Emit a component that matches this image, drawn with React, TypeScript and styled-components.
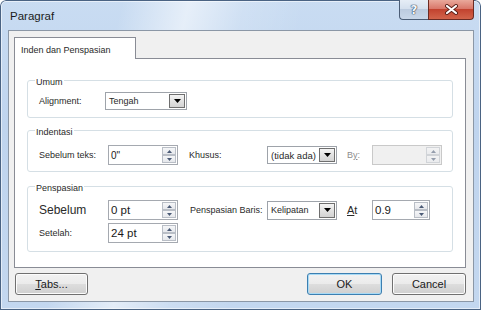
import React from "react";
import styled, { createGlobalStyle, css } from "styled-components";

const GlobalStyle = createGlobalStyle`
  html, body { margin: 0; padding: 0; background: #ffffff; }
  body { font-family: "Liberation Sans", Arial, sans-serif; }
  * { box-sizing: border-box; }
`;

const Window = styled.div`
  width: 481px;
  height: 310px;
  display: flex;
  flex-direction: column;
  padding: 0 7px 8px 8px;
  border-radius: 6px 6px 0 0;
  overflow: hidden;
  background:
    linear-gradient(104deg, rgba(255,255,255,0) 22%, rgba(255,255,255,0.55) 34%, rgba(255,255,255,0.15) 44%, rgba(255,255,255,0) 55%),
    linear-gradient(180deg, #c9dcf2 0%, #bfd4ee 40%, #c3d7ef 100%);
  box-shadow: inset 0 0 0 1px #4a6383, inset 0 0 0 2px rgba(255, 255, 255, 0.55);
`;

const TitleBar = styled.div`
  height: 30px;
  display: flex;
  align-items: center;
  padding-left: 2px;
`;

const TitleText = styled.span`
  font-size: 11.5px;
  color: #1b1b1b;
  margin-top: 1px;
`;

const CaptionGroup = styled.div`
  margin-left: auto;
  align-self: flex-start;
  display: flex;
  height: 20px;
`;

const CaptionButton = styled.div<{ $kind: "help" | "close" }>`
  height: 20px;
  display: flex;
  align-items: center;
  justify-content: center;
  border: 1px solid #4b5d76;
  border-top: none;
  ${(p) =>
    p.$kind === "help"
      ? css`
          width: 29px;
          border-right: none;
          border-radius: 0 0 0 4px;
          background: linear-gradient(180deg, #e6edf6 0%, #d5e0ee 45%, #bccbdf 50%, #c9d7e9 100%);
        `
      : css`
          width: 46px;
          border-radius: 0 0 4px 0;
          border-color: #6b2b23;
          background: linear-gradient(180deg, #e9a99b 0%, #d9786a 45%, #c2432f 50%, #d2644b 100%);
        `}
`;

const HelpGlyph = styled.span`
  font-family: "DejaVu Sans", sans-serif;
  font-weight: bold;
  font-size: 12px;
  line-height: 12px;
  color: #f4f7fb;
  text-shadow: 0 0 1px #2d3c52, 0 0 1px #2d3c52, 0 0 1px #2d3c52;
`;

const Client = styled.div`
  flex: 1;
  display: flex;
  flex-direction: column;
  background: #f0f0f0;
  border: 1px solid #8b97a6;
  padding: 6px 7px 6px 5px;
`;

const TabStrip = styled.div`
  display: flex;
  height: 21px;
  position: relative;
  z-index: 1;
`;

const Tab = styled.div`
  width: 122px;
  height: 22px;
  background: #ffffff;
  border: 1px solid #898c95;
  border-bottom: none;
  font-size: 9px;
  color: #2a2a2a;
  padding: 7px 0 0 6px;
`;

const TabPanel = styled.div`
  height: 210px;
  background: #ffffff;
  border: 1px solid #898c95;
  padding: 21px 12px 0 12px;
  display: flex;
  flex-direction: column;
`;

const GroupBox = styled.div<{ $pt: number; $pb: number; $mt: number }>`
  position: relative;
  margin-top: ${(p) => p.$mt}px;
  border: 1px solid #d5dfe5;
  border-radius: 3px;
  padding: ${(p) => p.$pt}px 0 ${(p) => p.$pb}px 11px;
  display: flex;
  flex-direction: column;
  gap: 3px;
`;

const Legend = styled.span`
  position: absolute;
  top: -4px;
  left: 7px;
  padding: 0 1px;
  background: #ffffff;
  font-size: 9px;
  line-height: 11px;
  color: #2a2a2a;
`;

const Row = styled.div`
  display: flex;
  align-items: center;
`;

const Label = styled.span<{ $w: number; $ml?: number; $size?: number; $muted?: boolean }>`
  width: ${(p) => p.$w}px;
  margin-left: ${(p) => p.$ml ?? 0}px;
  font-size: ${(p) => p.$size ?? 9}px;
  color: ${(p) => (p.$muted ? "#8d8d8d" : "#2a2a2a")};
  white-space: nowrap;
  u { text-decoration: underline; text-underline-offset: 1px; }
`;

const SpinBox = styled.div<{ $w: number; $disabled?: boolean }>`
  width: ${(p) => p.$w}px;
  height: 20px;
  display: flex;
  border: 1px solid ${(p) => (p.$disabled ? "#c9c9c9" : "#a5a9b0")};
  background: ${(p) => (p.$disabled ? "#f0f0f0" : "#ffffff")};
`;

const SpinText = styled.span<{ $size?: number }>`
  flex: 1;
  padding-left: 2px;
  display: flex;
  align-items: center;
  font-size: ${(p) => p.$size ?? 11.5}px;
  color: #1a1a1a;
`;

const SpinButtons = styled.div<{ $disabled?: boolean }>`
  width: 15px;
  display: flex;
  flex-direction: column;
  padding: 1px 1px 1px 0;
  opacity: ${(p) => (p.$disabled ? 0.55 : 1)};
`;

const SpinHalf = styled.div`
  flex: 1;
  display: flex;
  align-items: center;
  justify-content: center;
  border: 1px solid #b9bec6;
  background: linear-gradient(180deg, #f5f6f8 0%, #e6e8ec 100%);
`;

const Combo = styled.div<{ $w: number; $h: number }>`
  width: ${(p) => p.$w}px;
  height: ${(p) => p.$h}px;
  display: flex;
  border: 1px solid #9ea3aa;
  background: #ffffff;
`;

const ComboText = styled.span<{ $size?: number }>`
  flex: 1;
  display: flex;
  align-items: center;
  padding-left: 3px;
  font-size: ${(p) => p.$size ?? 9}px;
  color: #2a2a2a;
  white-space: nowrap;
`;

const ComboButton = styled.div`
  width: 16px;
  margin: 1px;
  display: flex;
  align-items: center;
  justify-content: center;
  border: 1px solid #6f6f6f;
  background: linear-gradient(180deg, #f4f4f4 0%, #e2e2e2 50%, #d3d3d3 100%);
`;

const ButtonRow = styled.div`
  display: flex;
  margin-top: 5px;
  padding: 0 0 0 1px;
  gap: 10px;
`;

const PushButton = styled.div<{ $w: number; $default?: boolean }>`
  width: ${(p) => p.$w}px;
  height: 22px;
  display: flex;
  align-items: center;
  justify-content: center;
  border-radius: 3px;
  font-size: 11px;
  color: #1a1a1a;
  border: 1px solid ${(p) => (p.$default ? "#3c7fb1" : "#707070")};
  background: linear-gradient(180deg, #f2f2f2 0%, #ebebeb 48%, #dddddd 52%, #cfcfcf 100%);
  box-shadow: inset 0 0 0 1px ${(p) => (p.$default ? "#a8daf5" : "#fcfcfc")};
  u { text-decoration: underline; text-underline-offset: 1px; }
`;

const Push = styled.div`
  flex: 1;
`;

const UpArrow = () => (
  <svg width="5" height="3" viewBox="0 0 5 3">
    <path d="M0 3 L2.5 0 L5 3 Z" fill="#4a5a76" />
  </svg>
);

const DownArrow = () => (
  <svg width="5" height="3" viewBox="0 0 5 3">
    <path d="M0 0 L2.5 3 L5 0 Z" fill="#4a5a76" />
  </svg>
);

const ComboArrow = () => (
  <svg width="7" height="4" viewBox="0 0 7 4">
    <path d="M0 0 L3.5 4 L7 0 Z" fill="#000000" />
  </svg>
);

const CloseGlyph = () => (
  <svg width="15" height="11" viewBox="0 0 15 11">
    <path d="M3 2 L12 9 M12 2 L3 9" stroke="#5a2018" strokeWidth="4" strokeLinecap="round" />
    <path d="M3 2 L12 9 M12 2 L3 9" stroke="#ffffff" strokeWidth="2.2" strokeLinecap="round" />
  </svg>
);

const Spin = ({ w, value, size, disabled }: { w: number; value: string; size?: number; disabled?: boolean }) => (
  <SpinBox $w={w} $disabled={disabled}>
    <SpinText $size={size}>{value}</SpinText>
    <SpinButtons $disabled={disabled}>
      <SpinHalf>
        <UpArrow />
      </SpinHalf>
      <SpinHalf>
        <DownArrow />
      </SpinHalf>
    </SpinButtons>
  </SpinBox>
);

const Select = ({ w, h, value, size }: { w: number; h: number; value: string; size?: number }) => (
  <Combo $w={w} $h={h}>
    <ComboText $size={size}>{value}</ComboText>
    <ComboButton>
      <ComboArrow />
    </ComboButton>
  </Combo>
);

export default function App() {
  return (
    <>
      <GlobalStyle />
      <Window>
        <TitleBar>
          <TitleText>Paragraf</TitleText>
          <CaptionGroup>
            <CaptionButton $kind="help">
              <HelpGlyph>?</HelpGlyph>
            </CaptionButton>
            <CaptionButton $kind="close">
              <CloseGlyph />
            </CaptionButton>
          </CaptionGroup>
        </TitleBar>
        <Client>
          <TabStrip>
            <Tab>Inden dan Penspasian</Tab>
          </TabStrip>
          <TabPanel>
            <GroupBox $mt={0} $pt={11} $pb={7}>
              <Legend>Umum</Legend>
              <Row>
                <Label $w={66}>Alignment:</Label>
                <Select w={82} h={18} value="Tengah" />
              </Row>
            </GroupBox>
            <GroupBox $mt={12} $pt={14} $pb={6}>
              <Legend>Indentasi</Legend>
              <Row>
                <Label $w={69}>Sebelum teks:</Label>
                <Spin w={70} value={'0"'} size={10} />
                <Label $w={78} $ml={11}>Khusus:</Label>
                <Select w={70} h={18} value="(tidak ada)" size={9.5} />
                <Label $w={25} $ml={10} $muted>
                  B<u>y</u>:
                </Label>
                <Spin w={70} value="" disabled />
              </Row>
            </GroupBox>
            <GroupBox $mt={14} $pt={13} $pb={8}>
              <Legend>Penspasian</Legend>
              <Row>
                <Label $w={69} $size={12}>Sebelum</Label>
                <Spin w={70} value="0 pt" />
                <Label $w={77} $ml={12}>Penspasian Baris:</Label>
                <Select w={70} h={19} value="Kelipatan" />
                <Label $w={25} $ml={10} $size={11}>
                  <u>A</u>t
                </Label>
                <Spin w={58} value="0.9" />
              </Row>
              <Row>
                <Label $w={69}>Setelah:</Label>
                <Spin w={70} value="24 pt" />
              </Row>
            </GroupBox>
          </TabPanel>
          <ButtonRow>
            <PushButton $w={73}>
              <span>
                <u>T</u>abs...
              </span>
            </PushButton>
            <Push />
            <PushButton $w={75} $default>
              OK
            </PushButton>
            <PushButton $w={74}>Cancel</PushButton>
          </ButtonRow>
        </Client>
      </Window>
    </>
  );
}
